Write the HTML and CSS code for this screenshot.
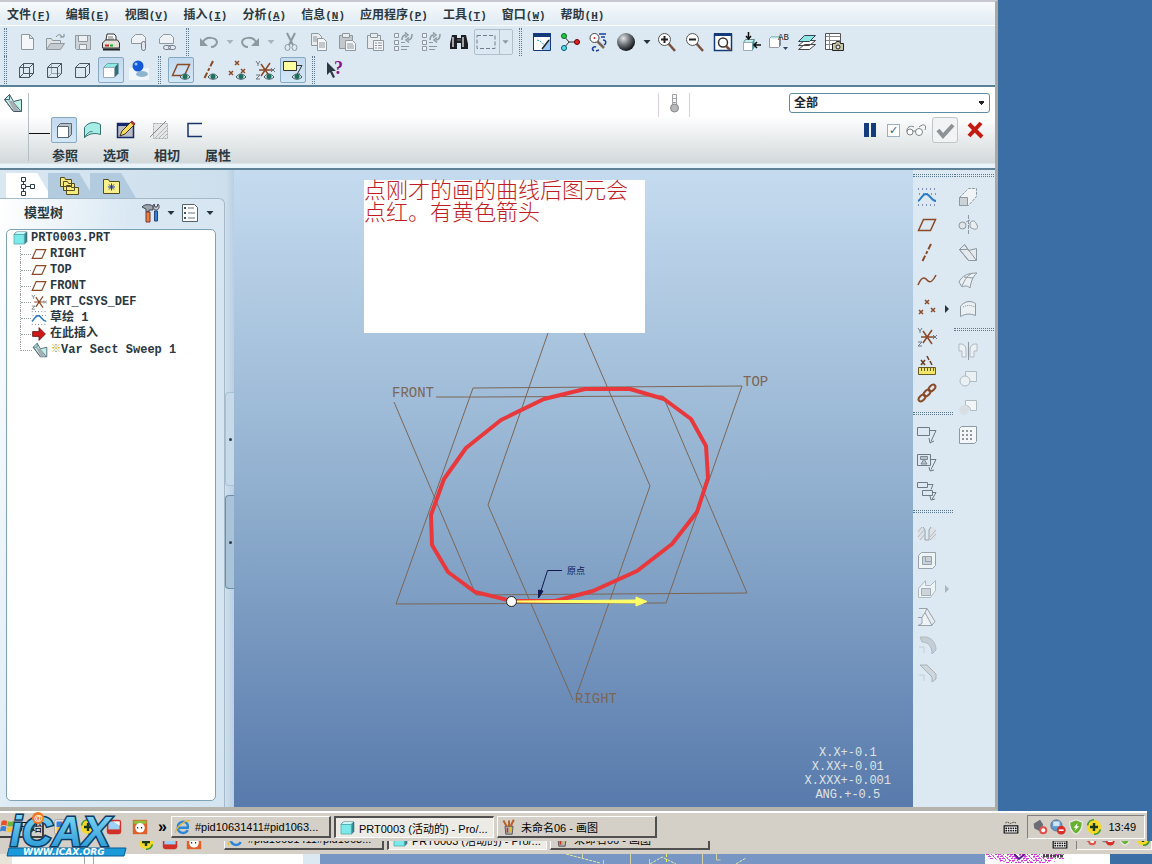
FILE: index.html
```html
<!DOCTYPE html>
<html lang="zh-CN">
<head>
  <meta charset="UTF-8">
  <meta name="viewport" content="width=device-width, initial-scale=1.0">
  <title>PRT0003 (活动的) - Pro/ENGINEER</title>
  <link rel="stylesheet" href="styles.css">
</head>
<body>

  <!-- Icon sprite, every symbol on a 20x20 grid -->
  <svg class="sprite" aria-hidden="true">
    <symbol id="i-caret" viewBox="0 0 8 20"><path d="M.500 8h7l-3.500 4z" fill="currentColor"/></symbol>
    <symbol id="i-new" viewBox="0 0 20 20"><path d="M4.500 2.500h8l4 4v11h-12zM12.500 2.500v4h4" fill="#f4f6f8" stroke="currentColor"/></symbol>
    <symbol id="i-open" viewBox="0 0 20 20"><path d="M1.500 17.500v-11h5l1 2h8v3" fill="#dfe3e6" stroke="currentColor"/><path d="M1.500 17.500l4-6h14l-4 6z" fill="#c6cbcf" stroke="currentColor"/><path d="M11 5c2-3 5-3 6 0M15 5h4v-3" fill="none" stroke="#7d868c"/></symbol>
    <symbol id="i-save" viewBox="0 0 20 20"><path d="M2.500 3.500h15v14h-14l-1-1z" fill="#cdd3d8" stroke="currentColor"/><path d="M5.500 3.500h9v6h-9zM6.500 12.500h7v5h-7z" fill="#eef1f3" stroke="currentColor"/></symbol>
    <symbol id="i-print" viewBox="0 0 20 20"><path d="M5 8l1-6h7l2 2v5z" fill="#fff" stroke="#333"/><path d="M7 5h5M7 7h6" stroke="#777"/><path d="M1.500 11l3-3h12l2 3v5h-17z" fill="#e4e2d8" stroke="#333"/><path d="M2 17.500h17" stroke="#222" stroke-width="2"/><path d="M4 13.500h4" stroke="#c22" stroke-width="2"/><path d="M9 13.500h3" stroke="#2a2" stroke-width="2"/></symbol>
    <symbol id="i-mail" viewBox="0 0 20 20"><path d="M2.500 11.500v-5l4-4h7l3 3v6z" fill="#eef2f5" stroke="currentColor"/><rect x="12.500" y="9.500" width="4" height="9" rx="2" fill="#e0e6ea" stroke="#778"/></symbol>
    <symbol id="i-link" viewBox="0 0 20 20"><path d="M2.500 11.500v-5l4-4h7l3 3v6z" fill="#eef2f5" stroke="currentColor"/><rect x="6.500" y="13.500" width="7" height="4" rx="2" fill="none" stroke="#778"/><rect x="11.500" y="13.500" width="7" height="4" rx="2" fill="none" stroke="#778"/></symbol>
    <symbol id="i-undo" viewBox="0 0 20 20"><path d="M4 10c3-6 13-5 14 0c0 3-3 5-6 5" fill="none" stroke="currentColor" stroke-width="2"/><path d="M1 6v8h8z" fill="currentColor"/></symbol>
    <symbol id="i-redo" viewBox="0 0 20 20"><path d="M16 10c-3-6-13-5-14 0c0 3 3 5 6 5" fill="none" stroke="currentColor" stroke-width="2"/><path d="M19 6v8h-8z" fill="currentColor"/></symbol>
    <symbol id="i-cut" viewBox="0 0 20 20"><path d="M6 1l6 12M14 1l-6 12" stroke="currentColor" stroke-width="2"/><ellipse cx="6.500" cy="15.500" rx="2.500" ry="3" fill="none" stroke="currentColor"/><ellipse cx="13.500" cy="15.500" rx="2.500" ry="3" fill="none" stroke="currentColor"/></symbol>
    <symbol id="i-copy" viewBox="0 0 20 20"><path d="M2.500 1.500h7l3 3v9h-10z" fill="#e8ecef" stroke="currentColor"/><path d="M8.500 6.500h6l3 3v9h-9z" fill="#f4f6f8" stroke="currentColor"/><path d="M4 5h4M4 7h4M4 9h4M10 11h6M10 13h6M10 15h6" stroke="currentColor"/></symbol>
    <symbol id="i-paste" viewBox="0 0 20 20"><path d="M2.500 3.500h13v13h-13z" fill="#c3c8cc" stroke="currentColor"/><path d="M5.500 1.500h7v4h-7z" fill="#e8ecef" stroke="currentColor"/><path d="M8.500 8.500h7l3 3v7h-10z" fill="#f4f6f8" stroke="currentColor"/><path d="M10 12h6M10 14h7M10 16h7" stroke="currentColor"/></symbol>
    <symbol id="i-paste2" viewBox="0 0 20 20"><path d="M2.500 3.500h13v13h-13z" fill="#e8ecef" stroke="currentColor"/><path d="M5.500 1.500h7v4h-7z" fill="#e8ecef" stroke="currentColor"/><path d="M8.500 8.500h10v10h-10z" fill="#f4f6f8" stroke="currentColor"/><path d="M10 11h2M13 11h4M10 13.500h2M13 13.500h4M10 16h2M13 16h4" stroke="currentColor"/></symbol>
    <symbol id="i-regen" viewBox="0 0 20 20"><path d="M1.500 1.500h4v4h-4zM1.500 8.500h4v4h-4zM1.500 14.500h4v4h-4z" fill="#eef" stroke="currentColor"/><path d="M8 10.500h4M8 14.500h8M8 17.500h6" stroke="currentColor"/><path d="M9 8c0-4 2-5 4-5M12 .500l3 2.500-3 2.500M19 2c0 4-1 6-4 6M16 5.500l-3 2.500 3 2.500" fill="none" stroke="currentColor" stroke-width="1.500"/></symbol>
    <symbol id="i-find" viewBox="0 0 20 20"><path d="M3 3h5v3h4v-3h5l2 9v5h-7v-6h-4v6h-7v-5z" fill="#1d1f22"/><path d="M4 5v10M14 5v10" stroke="#cfd3d6" stroke-width="1.500"/><path d="M8 8h4" stroke="#777"/></symbol>
    <symbol id="i-select" viewBox="0 0 20 20"><path d="M1 3.500h18v13h-18z" fill="none" stroke="#6f7f8c" stroke-dasharray="4 2"/></symbol>
    <symbol id="i-repaint" viewBox="0 0 20 20"><path d="M1.500 1.500h17v17h-17z" fill="#fff" stroke="#153a7a"/><path d="M10 18l8-12v12z" fill="#9cc8f4"/><path d="M1 1h18v4h-18z" fill="#153a7a"/><path d="M5 8c4 1 7 4 8 7" fill="none" stroke="#39c" stroke-dasharray="2 1"/><path d="M17 8l-7 9" stroke="#222" stroke-width="1.500"/></symbol>
    <symbol id="i-spin" viewBox="0 0 20 20"><path d="M4 4l5 6h7M9 10l-5 6" fill="none" stroke="#333"/><circle cx="4" cy="4" r="2.500" fill="#2c3" stroke="#063"/><circle cx="4" cy="16" r="2.500" fill="#5de" stroke="#057"/><circle cx="17" cy="10" r="2.500" fill="#d22" stroke="#600"/></symbol>
    <symbol id="i-orient" viewBox="0 0 20 20"><path d="M9 9l7 7" stroke="#765" stroke-width="2.500"/><circle cx="6.500" cy="6" r="4.500" fill="#fff" stroke="#444"/><circle cx="6.500" cy="6" r="1" fill="#c22"/><path d="M11 2h7M13 5h4M15 8c3 0 4 3 1 5M8 15c-3-1-5 2-2 4M8 19l3-1" fill="none" stroke="#1a3f9a" stroke-width="1.500"/></symbol>
    <symbol id="i-ball" viewBox="0 0 20 20"><circle cx="10" cy="10" r="9" fill="url(#g-ball)"/></symbol>
    <symbol id="i-zoomin" viewBox="0 0 20 20"><path d="M11 11l7 8" stroke="#7a5140" stroke-width="2.500"/><circle cx="7.500" cy="7.500" r="6" fill="#fff" stroke="#555"/><path d="M4 7.500h7M7.500 4v7" stroke="#222" stroke-width="2"/></symbol>
    <symbol id="i-zoomout" viewBox="0 0 20 20"><path d="M11 11l7 8" stroke="#7a5140" stroke-width="2.500"/><circle cx="7.500" cy="7.500" r="6" fill="#fff" stroke="#555"/><path d="M4 7.500h7" stroke="#222" stroke-width="2"/></symbol>
    <symbol id="i-refit" viewBox="0 0 20 20"><path d="M1.500 2.500h17v16h-17z" fill="#fff" stroke="#153a7a" stroke-width="1.500"/><path d="M1 1h18v3h-18z" fill="#153a7a"/><circle cx="10" cy="10.500" r="4.500" fill="#fff" stroke="#333" stroke-width="1.500"/><path d="M13 14l4 4" stroke="#7a5140" stroke-width="2.500"/></symbol>
    <symbol id="i-view" viewBox="0 0 20 20"><path d="M2.500 10.500l2-3h9l-2 3z" fill="#bff1ee" stroke="#688"/><path d="M2.500 10.500h9v8h-9z" fill="#fff" stroke="#9ab"/><path d="M11.500 10.500l2-3v8l-2 3z" fill="#3a9a98"/><path d="M7.500 0v6M5 4l2.500 3 2.500-3M20 13h-6M16 10l-3 3 3 3" fill="none" stroke="#111" stroke-width="1.500"/></symbol>
    <symbol id="i-saved" viewBox="0 0 20 20"><path d="M.500 6.500l2-2h9v9l-2 2h-9z" fill="#fff" stroke="#99a"/><path d="M1 6.500l2-2h9l-2 2z" fill="#a7e6e3"/><path d="M10 7l2-2v8l-2 2z" fill="#7a8a94"/><text x="9" y="8" font-family="Liberation Mono" font-size="9" fill="#222">AB</text><path d="M14 15h5l-2.500 3z" fill="#346"/></symbol>
    <symbol id="i-layers" viewBox="0 0 20 20"><path d="M1.500 17.500l6-5h11l-6 5zM1.500 13.500l6-5h11l-6 5z" fill="#fff" stroke="#444"/><path d="M1.500 9.500l6-6h11l-6 6z" fill="#8fe4e4" stroke="#345"/></symbol>
    <symbol id="i-camera" viewBox="0 0 20 20"><path d="M.500 1.500h15v16h-15z" fill="#fff" stroke="#555"/><path d="M1 4.500h14M1 8.500h14M1 12.500h14M4.500 2v15" stroke="#888"/><path d="M7.500 11.500h3l1-2h3l1 2h3v7h-11z" fill="#c8c4a8" stroke="#222"/><circle cx="13" cy="15" r="2" fill="#eee" stroke="#222"/></symbol>

    <symbol id="i-wire" viewBox="0 0 20 20"><path d="M2.500 7.500h10v10h-10zM6.500 3.500h10v10h-10zM2.500 7.500l4-4M12.500 7.500l4-4M12.500 17.500l4-4M2.500 17.500l4-4" fill="none" stroke="#4a565e"/></symbol>
    <symbol id="i-hidden" viewBox="0 0 20 20"><path d="M6.500 3.500v10h10M2.500 17.500l4-4" fill="none" stroke="#9aa5ac"/><path d="M2.500 7.500h10v10h-10zM2.500 7.500l4-4h10v10l-4 4M12.500 7.500l4-4" fill="none" stroke="#4a565e"/></symbol>
    <symbol id="i-nohidden" viewBox="0 0 20 20"><path d="M2.500 7.500h10v10h-10zM2.500 7.500l4-4h10v10l-4 4M12.500 7.500l4-4" fill="none" stroke="#4a565e"/></symbol>
    <symbol id="i-shade" viewBox="0 0 20 20"><path d="M2.500 7.500l4-4h11l-4 4z" fill="#8fe8e4" stroke="#6aa"/><path d="M13.500 7.500l4-4v10l-4 4z" fill="#2f6f78"/><path d="M2.500 7.500h11v10h-11z" fill="#fff" stroke="#9ab"/></symbol>
    <symbol id="i-real" viewBox="0 0 20 20"><path d="M0 8h20v12h-20z" fill="#eef5fb"/><ellipse cx="13" cy="14" rx="6" ry="3" fill="#8fb4d0"/><circle cx="9" cy="6" r="5.500" fill="#1558d8"/><circle cx="7" cy="4" r="1.500" fill="#9cc6ff"/></symbol>
    <symbol id="i-eye" viewBox="0 0 20 20"><path d="M9 17c3-4 7-4 10 0c-3 3-7 3-10 0z" fill="#d5ece6" stroke="#456"/><circle cx="14" cy="16.500" r="2.500" fill="#1f6f5e"/></symbol>
    <symbol id="i-plane" viewBox="0 0 20 20"><path d="M1.500 15.500l5-11h12l-5 11z" fill="none" stroke="currentColor" stroke-width="1.500"/></symbol>
    <symbol id="i-axis" viewBox="0 0 20 20"><path d="M14 1l-9 18" stroke="currentColor" stroke-width="2" stroke-dasharray="6 2 3 2"/></symbol>
    <symbol id="i-points" viewBox="0 0 20 20"><path d="M8 1l4 4m0-4l-4 4M2 11l4 4m0-4l-4 4M14 9l4 4m0-4l-4 4" stroke="currentColor" stroke-width="1.500"/></symbol>
    <symbol id="i-csys" viewBox="0 0 20 20"><path d="M4 10h13M6 4l9 13M15 3l-9 13" stroke="currentColor" stroke-width="1.500"/><path d="M1 1l2 3 2-3M3 4v2M1 15h4l-4 4h4M16 8l4 4m0-4l-4 4" fill="none" stroke="#6d7880"/></symbol>
    <symbol id="i-notes" viewBox="0 0 20 20"><path d="M.500 1.500h13v9h-13z" fill="#ffffa0" stroke="#333"/><path d="M14 5.500h5l-5 9M12 15l5-1" fill="none" stroke="#333"/></symbol>
    <symbol id="i-help" viewBox="0 0 20 20"><path d="M2 2v13l3-3 3 6 2-1-3-6h4z" fill="#2d3a42"/><text x="9" y="14" font-family="Liberation Serif" font-weight="bold" font-size="18" fill="#8a108a">?</text></symbol>

    <symbol id="i-sweep" viewBox="0 0 20 20"><path d="M1.500 6.500l5-5 4 7 8-2v12h-8z" fill="#bff0e8" stroke="#456"/><path d="M1.500 6.500l9 12M10 9l8 9.500M6.500 1.500v5l-5 0" fill="none" stroke="#567"/><path d="M5 7l5 1.500 6 9.500h-5z" fill="#a9adb0"/></symbol>
    <symbol id="i-solid" viewBox="0 0 20 20"><path d="M3.500 6.500l3-3h11v11l-3 3z" fill="#b9c0c6" stroke="#567"/><path d="M3.500 6.500h11v11h-11z" fill="#fff" stroke="#567"/></symbol>
    <symbol id="i-surface" viewBox="0 0 20 20"><path d="M2.500 17.500v-10c4-6 11-6 16-3v10c-6-2-11-1-16 3z" fill="#a5ede6" stroke="#387070"/><path d="M2.500 17.500c3-5 5-6 8-6" fill="none" stroke="#387070"/></symbol>
    <symbol id="i-sketch" viewBox="0 0 20 20"><path d="M1.500 3.500h16v14h-16z" fill="#b9bcc2" stroke="#152a6a" stroke-width="1.500"/><path d="M1 3h17v3h-17z" fill="#152a6a"/><path d="M4 16l2-5 10-10 3 3-10 10z" fill="#f5dc5a" stroke="#432"/><path d="M15 1.500l3.500 3" stroke="#a33" stroke-width="2.500"/></symbol>
    <symbol id="i-thin" viewBox="0 0 20 20"><path d="M3.500 3.500h14v15h-14z" fill="#e3e5e6" stroke="#a4a9ad" stroke-dasharray="2 1"/><path d="M5 18l12-12M9 18l8-8M13 18l4-4" stroke="#b4b9bd"/><path d="M0 17l16-16" stroke="#888"/></symbol>
    <symbol id="i-open-profile" viewBox="0 0 20 20"><path d="M18 3.500h-14v13h14" fill="none" stroke="#16356e" stroke-width="1.500"/></symbol>
    <symbol id="i-thermo" viewBox="0 0 20 20"><path d="M8.500 1.500h4v11h-4zM8.500 5.500h4M8.500 9.500h4" fill="#f4f4f4" stroke="#a0a4a8"/><circle cx="10.500" cy="15" r="4" fill="#b5b8ba" stroke="#888"/></symbol>
    <symbol id="i-pause" viewBox="0 0 20 20"><path d="M4 3h5v14h-5zM11 3h5v14h-5z" fill="#153c7c"/></symbol>
    <symbol id="i-glasses" viewBox="0 0 20 20"><path d="M1 12c-1-5 4-7 7-5M13 7c5-4 8-2 6 3" fill="none" stroke="#7c8488"/><circle cx="4" cy="12" r="3" fill="#fff" stroke="#7c8488"/><circle cx="13" cy="12" r="3.500" fill="#fff" stroke="#7c8488"/><path d="M7 11h3" stroke="#7c8488"/></symbol>
    <symbol id="i-ok" viewBox="0 0 20 20"><path d="M3 10l5 6 10-11" fill="none" stroke="#8d9296" stroke-width="4"/></symbol>
    <symbol id="i-cancel" viewBox="0 0 20 20"><path d="M4 4l13 13M16 3l-12 13" stroke="#c41a10" stroke-width="4"/></symbol>

    <symbol id="i-tree" viewBox="0 0 20 20"><path d="M4.500 1.500h4v4h-4zM4.500 8.500h4v4h-4zM4.500 15.500h4v4h-4zM13.500 8.500h4v4h-4zM6.500 6v2M6.500 13v2M9 10.500h4" fill="#fff" stroke="#2c3c46"/></symbol>
    <symbol id="i-folders" viewBox="0 0 20 20"><path d="M1.500 10.500v-9h4l1 2h6v7zM4.500 14.500v-9h4l1 2h6v7zM7.500 18.500v-9h4l1 2h7v7z" fill="#f6ec7e" stroke="#554a20"/></symbol>
    <symbol id="i-fav" viewBox="0 0 20 20"><path d="M2.500 17.500v-14h5l1 2h10v12z" fill="#f8f08a" stroke="#554a20"/><path d="M10.500 7.500v7M7 11h7M8 8.500l5 5M13 8.500l-5 5" stroke="#223a9a"/></symbol>
    <symbol id="i-tools" viewBox="0 0 20 20"><path d="M1 4c3-3 7-3 11-1v4h-4v2h-3v-3z" fill="#9aa4ab" stroke="#445"/><path d="M5 9h4v10h-4z" fill="#e8803a" stroke="#733"/><path d="M13 1c-1 4 0 6 1 6h2c2-1 3-4 1-6l-1 3h-2z" fill="#c5ccd1" stroke="#445"/><path d="M13.500 8h3v10h-3z" fill="#3a7fd6" stroke="#247"/></symbol>
    <symbol id="i-list" viewBox="0 0 20 20"><path d="M2.500 1.500h12l3 3v14h-15z" fill="#fdfdfe" stroke="#56626a"/><path d="M8 5h6M8 10h7M8 15h7" stroke="#678"/><path d="M4.500 4.500h1v1h-1zM4.500 9.500h1v1h-1zM4.500 14.500h1v1h-1z" stroke="#234"/></symbol>
    <symbol id="i-part" viewBox="0 0 20 20"><path d="M2.500 5.500l3-3h13v12l-3 3z" fill="#2d8f96" stroke="#356"/><path d="M2.500 5.500h13v12h-13z" fill="#7ceaea" stroke="#5aa"/><path d="M3 5l3-2.500h12l-3 2.500z" fill="#c9f8f8"/></symbol>
    <symbol id="i-curve" viewBox="0 0 20 20"><path d="M1 2h18M1 18h18M2 7h17" stroke="#2a3a8a" stroke-dasharray="1 3"/><path d="M1 14c3-1 4-7 8-7s5 7 10 7" fill="none" stroke="#2c7cc4" stroke-width="2"/></symbol>
    <symbol id="i-insert" viewBox="0 0 20 20"><path d="M2 7h8v-5l8 8-8 8v-5h-8z" fill="#d01818" stroke="#5a1010"/></symbol>

    <symbol id="i-spline" viewBox="0 0 20 20"><path d="M1 14c3-7 6-9 9-5s6 1 9-5" fill="none" stroke="currentColor" stroke-width="1.500"/></symbol>
    <symbol id="i-field" viewBox="0 0 20 20"><path d="M1.500 12.500h17v7h-17z" fill="#f0e66a" stroke="#6a5a20"/><path d="M4.500 13v3M7.500 13v3M10.500 13v3M13.500 13v3M16.500 13v3" stroke="#6a5a20"/><path d="M4 5l4 5m0-5l-4 5M10 1l2 4M13 6l2 4" stroke="#6a3c20" stroke-width="1.500"/></symbol>
    <symbol id="i-chain" viewBox="0 0 20 20"><g fill="none" stroke="currentColor" stroke-width="2"><ellipse cx="5" cy="15" rx="4" ry="2.500" transform="rotate(-45 5 15)"/><ellipse cx="10" cy="10" rx="4" ry="2.500" transform="rotate(-45 10 10)"/><ellipse cx="15" cy="5" rx="4" ry="2.500" transform="rotate(-45 15 5)"/></g></symbol>
    <symbol id="i-note1" viewBox="0 0 20 20"><path d="M.500 2.500h12v8h-12zM13 5.500h6l-5 11M12 13l1 5 4-2" fill="none" stroke="#6d7a84"/></symbol>
    <symbol id="i-note2" viewBox="0 0 20 20"><path d="M.500 1.500h13v11h-13zM14 6.500h5l-5 10M12 14l1 4 4-1" fill="none" stroke="#6d7a84"/><path d="M3.500 3.500h7v3h-7zM4 11l3-5 3 5z" fill="#b8c3cb" stroke="#7c8992"/></symbol>
    <symbol id="i-note3" viewBox="0 0 20 20"><path d="M.500 1.500h10v5h-10zM5.500 9.500h10v5h-10zM11 3.500h5l-2 5M16 11.500h3l-4 7M13 15l1 4 4-1" fill="none" stroke="#6d7a84"/></symbol>
    <symbol id="i-hole" viewBox="0 0 20 20"><path d="M1 4h5l2 3v10h-7zM19 4h-5l-2 3v10h7z" fill="#dde3e7"/><path d="M6 4l2 3v10h4v-10l2-3" fill="none" stroke="currentColor"/><path d="M1 9l4-5M1 14l6-7M3 17l5-6M13 14l6-7M13 17l6-6" stroke="#b0bac1"/></symbol>
    <symbol id="i-shell" viewBox="0 0 20 20"><path d="M1.500 4.500l3-3h14v13l-3 3h-14z" fill="#eef3f6" stroke="currentColor"/><path d="M5.500 5.500h9v8h-9z" fill="#c9d2d8" stroke="currentColor"/><path d="M8.500 5.500v5h6" fill="none" stroke="currentColor"/></symbol>
    <symbol id="i-rib" viewBox="0 0 20 20"><path d="M1.500 9.500l7-8v5h5l5-5v10l-5 7h-12z" fill="#eef3f6" stroke="#b0bac1"/><path d="M4.500 9.500h9v7h-9z" fill="#cdd5da" stroke="#a3aeb6"/></symbol>
    <symbol id="i-draft" viewBox="0 0 20 20"><path d="M2 1.500h8l8 13-3 3.500" fill="#e6ecf0" stroke="currentColor"/><path d="M1 18.500h14l-7-13-3 5v6l-4 2zM8 5.500l2-4M5 10.500h-4" fill="#eef3f6" stroke="currentColor"/></symbol>
    <symbol id="i-round" viewBox="0 0 20 20"><path d="M3 2h6c6 1 10 6 10 13l-4 4c0-8-4-12-10-12z" fill="#c5ced4" stroke="#b0bac1"/><path d="M2 12h5v6" fill="none" stroke="#c5ced4"/></symbol>
    <symbol id="i-chamfer" viewBox="0 0 20 20"><path d="M3 2h7l9 9v5l-4 3v-5l-8-8z" fill="#cfd6db" stroke="#a8b3ba"/><path d="M2 12h5v6" fill="none" stroke="#c5ced4"/></symbol>
    <symbol id="i-extrude" viewBox="0 0 20 20"><path d="M1.500 10.500l7-7 2-2h8v8l-8 9h-9z" fill="#f0f4f7" stroke="currentColor" stroke-dasharray="3 1"/><path d="M1.500 10.500h8v8h-8z" fill="#cbd3d9" stroke="currentColor"/></symbol>
    <symbol id="i-revolve" viewBox="0 0 20 20"><circle cx="4.500" cy="10.500" r="3.500" fill="#dfe5e9" stroke="currentColor"/><path d="M10.500 0v20" stroke="currentColor" stroke-dasharray="4 1"/><path d="M12 8c3-4 5-2 7 2s-2 6-7 2zM8 7l4-2" fill="#e9eef1" stroke="currentColor"/></symbol>
    <symbol id="i-vss" viewBox="0 0 20 20"><path d="M1.500 6.500l5-5 4 6 8-2v12h-8z" fill="#e3e9ed" stroke="currentColor"/><path d="M1.500 6.500l9 11M6.500 1.500l12 16M1.500 6.500h8" fill="none" stroke="currentColor"/></symbol>
    <symbol id="i-boundary" viewBox="0 0 20 20"><path d="M1 11c3-6 8-9 18-9-5 4-6 10-7 15-3-3-6-2-8-1zM6 6c3 0 6 1 9 1M4 15c3-7 6-11 9-12" fill="#eaf0f3" stroke="currentColor"/></symbol>
    <symbol id="i-style" viewBox="0 0 20 20"><path d="M2.500 17.500v-10c4-6 11-6 15-3v12c-5-2-10-2-15 1z" fill="#eaf0f3" stroke="currentColor"/><path d="M5 8c4-2 8-2 12 0" fill="none" stroke="currentColor" stroke-dasharray="1 1"/></symbol>
    <symbol id="i-mirror" viewBox="0 0 20 20"><path d="M1 3h3c3 1 4 3 4 6v7h-4v-6h-3zM19 3h-3c-3 1-4 3-4 6v7h4v-6h3z" fill="#eaf0f3" stroke="#b0bac1"/><path d="M10.500 1v18" stroke="currentColor"/></symbol>
    <symbol id="i-merge" viewBox="0 0 20 20"><path d="M7.500 2.500h11v10h-11z" fill="#eaf0f3" stroke="#b0bac1"/><circle cx="7" cy="12" r="5" fill="#eaf0f3" stroke="#b0bac1"/></symbol>
    <symbol id="i-trim" viewBox="0 0 20 20"><path d="M7.500 3.500h11v10h-6c0-3-2-5-5-5z" fill="#f2f6f8" stroke="#b0bac1"/><circle cx="6" cy="13" r="5" fill="#d8dfe4"/></symbol>
    <symbol id="i-pattern" viewBox="0 0 20 20"><path d="M1.500 3.500l2-2h15v15l-2 2h-15z" fill="#f4f7f9" stroke="currentColor"/><path d="M4 6h11M4 10h11M4 14h11" stroke="currentColor" stroke-width="2" stroke-dasharray="2 2"/></symbol>

    <symbol id="i-flag" viewBox="0 0 20 20"><path d="M2 4c3-2 5-1 7 0l-1 6c-2-1-4-2-7 0z" fill="#e8502a"/><path d="M10 4c3 1 5 1 8-1l-1 7c-3 1-5 1-8 0z" fill="#6cb43a"/><path d="M1 11c3-2 5-1 7 0l-1 6c-2-1-4-2-7 0z" fill="#3a7fd6"/><path d="M9 11c3 1 5 1 8 0l-1 6c-3 1-5 1-8 0z" fill="#f4c430"/></symbol>
    <symbol id="i-office" viewBox="0 0 20 20"><rect x="1" y="1" width="18" height="18" rx="2" fill="#fff" stroke="#888"/><path d="M3 3h7v7h-7z" fill="#3a7fd6"/><path d="M10 3h7v7h-7z" fill="#e86a2a"/><path d="M3 10h7v7h-7z" fill="#f4c430"/><path d="M10 10h7v7h-7z" fill="#5ab04a"/></symbol>
    <symbol id="i-plus" viewBox="0 0 20 20"><circle cx="10" cy="10" r="9" fill="#f6d828"/><path d="M2 8a8 8 0 0 1 8-7M18 13a8 8 0 0 1-8 6" stroke="#3c9a2a" stroke-width="2" fill="none"/><path d="M5 10h10M10 5v10" stroke="#163a16" stroke-width="3"/></symbol>
    <symbol id="i-photo" viewBox="0 0 20 20"><rect x="1" y="1" width="18" height="18" rx="3" fill="#d03028"/><path d="M3 3h14v10h-14z" fill="#9cd0f4"/><path d="M9 3h8v5z" fill="#fff"/></symbol>
    <symbol id="i-face" viewBox="0 0 20 20"><path d="M1 1h18v18h-18z" fill="#e0602a"/><path d="M2 2h16v4h-16z" fill="#8cc03a"/><circle cx="10" cy="11" r="6" fill="#fff"/><path d="M7 10v2M12 10v2" stroke="#333" stroke-width="1.500"/></symbol>
    <symbol id="i-ie" viewBox="0 0 20 20"><path d="M16 14c-2 3-5 4-8 3-6-2-6-11 0-13 5-2 9 2 8 7h-11" fill="none" stroke="#2a86d8" stroke-width="3"/><path d="M1 18c-2-4 9-17 18-16" fill="none" stroke="#e8b830" stroke-width="1.500"/></symbol>
    <symbol id="i-paint" viewBox="0 0 20 20"><path d="M5 9h10l-1 10h-8z" fill="#a8b0b4" stroke="#444"/><path d="M7 9l-4-7M10 9v-7M12 9l4-8" stroke="#b8602a" stroke-width="2.500"/><path d="M8 11v6" stroke="#d03028" stroke-width="2"/><path d="M12 10v7" stroke="#e8c040" stroke-width="2"/></symbol>
    <symbol id="i-keyboard" viewBox="0 0 20 20"><path d="M3 5c3-3 5 2 8 0s4 0 6 0" fill="none" stroke="#222" stroke-dasharray="2 1"/><path d="M1.500 8.500h17v9h-17z" fill="#fff" stroke="#111" stroke-width="1.500"/><path d="M3 11.500h14M3 14.500h14" stroke="#111" stroke-width="2" stroke-dasharray="2 1"/></symbol>
    <symbol id="i-sound" viewBox="0 0 20 20"><path d="M2 6l8-5 4 6-3 9-8-4z" fill="#6a6e74"/><circle cx="14" cy="14" r="5" fill="#e05048"/><circle cx="14" cy="14" r="2.500" fill="#fff"/></symbol>
    <symbol id="i-net" viewBox="0 0 20 20"><circle cx="8" cy="8" r="7" fill="#5a9ad0" stroke="#667"/><path d="M4 3h8v6h-8z" fill="#cfe6f8"/><circle cx="14" cy="14" r="5.500" fill="#d83028"/><path d="M11 14h6" stroke="#fff" stroke-width="2"/></symbol>
    <symbol id="i-shield" viewBox="0 0 20 20"><path d="M10 1l8 3c0 7-2 12-8 15c-6-3-8-8-8-15z" fill="#68b030" stroke="#eee" stroke-width="1.500"/><path d="M12 5l-5 6h3l-2 4 6-6h-3z" fill="#fff"/></symbol>
    <radialGradient id="g-ball" cx="0.350" cy="0.300" r="0.700"><stop offset="0" stop-color="#e4e6e8"/><stop offset="0.500" stop-color="#70767c"/><stop offset="1" stop-color="#15181b"/></radialGradient>
    <linearGradient id="g-logo" x1="0" y1="0" x2="0" y2="1"><stop offset="0" stop-color="#8fe0fa"/><stop offset="1" stop-color="#1a8fd0"/></linearGradient>
  </svg>

  <div class="app">
    <!-- Menu bar -->
    <nav class="menubar">
      <button>文件<span>(<u>F</u>)</span></button>
      <button>编辑<span>(<u>E</u>)</span></button>
      <button>视图<span>(<u>V</u>)</span></button>
      <button>插入<span>(<u>I</u>)</span></button>
      <button>分析<span>(<u>A</u>)</span></button>
      <button>信息<span>(<u>N</u>)</span></button>
      <button>应用程序<span>(<u>P</u>)</span></button>
      <button>工具<span>(<u>T</u>)</span></button>
      <button>窗口<span>(<u>W</u>)</span></button>
      <button>帮助<span>(<u>H</u>)</span></button>
    </nav>

    <!-- Main toolbars -->
    <div class="toolbars">
      <div class="toolbar">
        <i class="grip"></i>
        <button class="tool" aria-label="新建"><svg><use href="#i-new"/></svg></button>
        <button class="tool" aria-label="打开"><svg><use href="#i-open"/></svg></button>
        <button class="tool" aria-label="保存"><svg><use href="#i-save"/></svg></button>
        <button class="tool" aria-label="打印"><svg><use href="#i-print"/></svg></button>
        <button class="tool" aria-label="发送附件"><svg><use href="#i-mail"/></svg></button>
        <button class="tool" aria-label="发送链接"><svg><use href="#i-link"/></svg></button>
        <i class="grip"></i>
        <button class="tool" aria-label="撤消"><svg><use href="#i-undo"/></svg></button>
        <button class="drop" aria-label="撤消列表"><svg><use href="#i-caret"/></svg></button>
        <button class="tool" aria-label="重做"><svg><use href="#i-redo"/></svg></button>
        <button class="drop" aria-label="重做列表"><svg><use href="#i-caret"/></svg></button>
        <button class="tool" aria-label="剪切"><svg><use href="#i-cut"/></svg></button>
        <button class="tool" aria-label="复制"><svg><use href="#i-copy"/></svg></button>
        <button class="tool" aria-label="粘贴"><svg><use href="#i-paste"/></svg></button>
        <button class="tool" aria-label="选择性粘贴"><svg><use href="#i-paste2"/></svg></button>
        <button class="tool" aria-label="再生"><svg><use href="#i-regen"/></svg></button>
        <button class="tool" aria-label="再生管理器"><svg><use href="#i-regen"/></svg></button>
        <button class="tool" aria-label="查找"><svg><use href="#i-find"/></svg></button>
        <button class="tool split" aria-label="选取框"><svg><use href="#i-select"/></svg><svg class="caret"><use href="#i-caret"/></svg></button>
        <i class="grip"></i>
        <button class="tool" aria-label="重画"><svg><use href="#i-repaint"/></svg></button>
        <button class="tool" aria-label="旋转中心"><svg><use href="#i-spin"/></svg></button>
        <button class="tool" aria-label="定向模式"><svg><use href="#i-orient"/></svg></button>
        <button class="tool" aria-label="外观库"><svg><use href="#i-ball"/></svg></button>
        <button class="drop dark" aria-label="外观列表"><svg><use href="#i-caret"/></svg></button>
        <button class="tool" aria-label="放大"><svg><use href="#i-zoomin"/></svg></button>
        <button class="tool" aria-label="缩小"><svg><use href="#i-zoomout"/></svg></button>
        <button class="tool" aria-label="重新调整"><svg><use href="#i-refit"/></svg></button>
        <button class="tool" aria-label="重定向"><svg><use href="#i-view"/></svg></button>
        <button class="tool" aria-label="已保存视图"><svg><use href="#i-saved"/></svg></button>
        <button class="tool" aria-label="层"><svg><use href="#i-layers"/></svg></button>
        <button class="tool" aria-label="视图管理器"><svg><use href="#i-camera"/></svg></button>
      </div>
      <div class="toolbar">
        <i class="grip"></i>
        <button class="tool" aria-label="线框"><svg><use href="#i-wire"/></svg></button>
        <button class="tool" aria-label="隐藏线"><svg><use href="#i-hidden"/></svg></button>
        <button class="tool" aria-label="无隐藏线"><svg><use href="#i-nohidden"/></svg></button>
        <button class="tool on" aria-label="着色"><svg><use href="#i-shade"/></svg></button>
        <button class="tool" aria-label="增强真实感"><svg><use href="#i-real"/></svg></button>
        <i class="grip"></i>
        <button class="tool datum on" aria-label="基准平面显示"><svg><use href="#i-plane"/><use href="#i-eye"/></svg></button>
        <button class="tool datum" aria-label="基准轴显示"><svg><use href="#i-axis"/><use href="#i-eye"/></svg></button>
        <button class="tool datum" aria-label="基准点显示"><svg><use href="#i-points"/><use href="#i-eye"/></svg></button>
        <button class="tool datum" aria-label="坐标系显示"><svg><use href="#i-csys"/><use href="#i-eye"/></svg></button>
        <button class="tool datum on" aria-label="注释显示"><svg><use href="#i-notes"/><use href="#i-eye"/></svg></button>
        <i class="grip"></i>
        <button class="tool" aria-label="上下文帮助"><svg><use href="#i-help"/></svg></button>
      </div>
    </div>

    <!-- Feature dashboard -->
    <section class="dashboard">
      <div class="dash-feature"><svg><use href="#i-sweep"/></svg></div>
      <div class="dash-main">
        <div class="dash-options">
          <i class="dash-line"></i>
          <button class="tool on" aria-label="实体"><svg><use href="#i-solid"/></svg></button>
          <button class="tool" aria-label="曲面"><svg><use href="#i-surface"/></svg></button>
          <i class="dash-gap"></i>
          <button class="tool" aria-label="草绘截面"><svg><use href="#i-sketch"/></svg></button>
          <i class="dash-gap"></i>
          <button class="tool" aria-label="移除材料"><svg><use href="#i-thin"/></svg></button>
          <i class="dash-gap"></i>
          <button class="tool" aria-label="薄板"><svg><use href="#i-open-profile"/></svg></button>
        </div>
        <div class="dash-tabs">
          <button>参照</button>
          <button>选项</button>
          <button>相切</button>
          <button>属性</button>
        </div>
      </div>
      <div class="dash-status"><svg><use href="#i-thermo"/></svg></div>
      <div class="dash-right">
        <select class="filter" aria-label="选取过滤器"><option>全部</option></select>
        <div class="dash-actions">
          <button class="tool" aria-label="暂停"><svg><use href="#i-pause"/></svg></button>
          <input class="preview" type="checkbox" aria-label="预览" checked>
          <button class="tool glasses" aria-label="几何预览"><svg><use href="#i-glasses"/></svg></button>
          <button class="tool ok" aria-label="完成"><svg><use href="#i-ok"/></svg></button>
          <button class="tool" aria-label="取消"><svg><use href="#i-cancel"/></svg></button>
        </div>
      </div>
    </section>

    <main class="workspace">
      <!-- Model tree -->
      <aside class="navigator">
        <div class="nav-tabs">
          <button class="nav-tab current" aria-label="模型树"><svg><use href="#i-tree"/></svg></button>
          <button class="nav-tab" aria-label="文件夹浏览器"><svg><use href="#i-folders"/></svg></button>
          <button class="nav-tab" aria-label="收藏夹"><svg><use href="#i-fav"/></svg></button>
        </div>
        <div class="nav-body">
          <header class="nav-head">
            <h2>模型树</h2>
            <button class="tool" aria-label="设置"><svg><use href="#i-tools"/></svg></button>
            <button class="drop dark" aria-label="设置列表"><svg><use href="#i-caret"/></svg></button>
            <button class="tool" aria-label="显示"><svg><use href="#i-list"/></svg></button>
            <button class="drop dark" aria-label="显示列表"><svg><use href="#i-caret"/></svg></button>
          </header>
          <div class="tree">
            <div class="tree-root"><svg><use href="#i-part"/></svg>PRT0003.PRT</div>
            <ul>
              <li><svg><use href="#i-plane"/></svg>RIGHT</li>
              <li><svg><use href="#i-plane"/></svg>TOP</li>
              <li><svg><use href="#i-plane"/></svg>FRONT</li>
              <li><svg><use href="#i-csys"/></svg>PRT_CSYS_DEF</li>
              <li><svg><use href="#i-curve"/></svg>草绘 1</li>
              <li><svg><use href="#i-insert"/></svg>在此插入</li>
              <li><svg><use href="#i-sweep"/></svg><b class="mark">※</b>Var Sect Sweep 1</li>
            </ul>
          </div>
        </div>
      </aside>
      <div class="sash">
        <i class="sash-handle"></i>
        <i class="sash-handle low"></i>
      </div>

      <!-- Graphics window -->
      <div class="viewport">
        <svg class="scene" viewBox="234 170 679 637" preserveAspectRatio="xMinYMin meet">
          <!-- datum planes -->
          <g class="datum-lines">
            <path d="M473 388L742 386L666 603L396 604Z"/>
            <path d="M436 397H481L663 396L747 593L476 595L394 402"/>
            <path d="M548 333L488 505L573 700M584 333L650 486L577 694"/>
          </g>
          <g class="datum-names">
            <text x="392" y="397">FRONT</text>
            <text x="743" y="386">TOP</text>
            <text x="575" y="703">RIGHT</text>
          </g>
          <!-- selected trajectory -->
          <path class="trajectory" d="M512 601L475 592L448 572L432 545L431 515L444 479L466 448L501 420L544 399L585 389H630L664 399L691 419L706 446L708 478L697 512L672 544L637 571L593 591L555 601Z"/>
          <path class="arrow" d="M516 601L636 600V597L647 601.500L636 606V603L516 602Z"/>
          <circle class="start" cx="511.500" cy="601.500" r="5"/>
          <path class="leader" d="M562 570.500H547.500L540 594"/>
          <path class="leader-head" d="M538.500 598V590L543 591Z"/>
          <text class="origin" x="567" y="574">原点</text>
        </svg>
        <p class="memo">点刚才的画的曲线后图元会点红。有黄色箭头</p>
        <div class="tolerance">
          <div>X.X+-0.1</div>
          <div>X.XX+-0.01</div>
          <div>X.XXX+-0.001</div>
          <div>ANG.+-0.5</div>
        </div>
      </div>

      <!-- Feature toolbars -->
      <div class="features">
        <div class="feature-col datum">
          <i class="rule"></i>
          <button class="tool" aria-label="草绘"><svg><use href="#i-curve"/></svg></button>
          <button class="tool" aria-label="平面"><svg><use href="#i-plane"/></svg></button>
          <button class="tool" aria-label="轴"><svg><use href="#i-axis"/></svg></button>
          <button class="tool" aria-label="曲线"><svg><use href="#i-spline"/></svg></button>
          <div class="flyout">
            <button class="tool" aria-label="点"><svg><use href="#i-points"/></svg></button>
            <i class="fly-arrow"></i>
          </div>
          <button class="tool" aria-label="坐标系"><svg><use href="#i-csys"/></svg></button>
          <button class="tool" aria-label="分析"><svg><use href="#i-field"/></svg></button>
          <button class="tool" aria-label="参照"><svg><use href="#i-chain"/></svg></button>
          <i class="rule"></i>
          <button class="tool" aria-label="注释"><svg><use href="#i-note1"/></svg></button>
          <button class="tool" aria-label="注释特征"><svg><use href="#i-note2"/></svg></button>
          <button class="tool" aria-label="传播"><svg><use href="#i-note3"/></svg></button>
          <i class="rule"></i>
          <div class="flyout-group">
            <button class="tool" aria-label="孔"><svg><use href="#i-hole"/></svg></button>
            <button class="tool" aria-label="壳"><svg><use href="#i-shell"/></svg></button>
            <div class="flyout">
              <button class="tool" aria-label="筋"><svg><use href="#i-rib"/></svg></button>
              <i class="fly-arrow"></i>
            </div>
            <button class="tool" aria-label="拔模"><svg><use href="#i-draft"/></svg></button>
            <button class="tool" aria-label="倒圆角"><svg><use href="#i-round"/></svg></button>
            <button class="tool" aria-label="倒角"><svg><use href="#i-chamfer"/></svg></button>
          </div>
        </div>
        <div class="feature-col">
          <i class="rule"></i>
          <button class="tool" aria-label="拉伸"><svg><use href="#i-extrude"/></svg></button>
          <button class="tool" aria-label="旋转"><svg><use href="#i-revolve"/></svg></button>
          <button class="tool" aria-label="可变截面扫描"><svg><use href="#i-vss"/></svg></button>
          <button class="tool" aria-label="边界混合"><svg><use href="#i-boundary"/></svg></button>
          <button class="tool" aria-label="造型"><svg><use href="#i-style"/></svg></button>
          <i class="rule"></i>
          <button class="tool" aria-label="镜像"><svg><use href="#i-mirror"/></svg></button>
          <button class="tool" aria-label="合并"><svg><use href="#i-merge"/></svg></button>
          <button class="tool" aria-label="修剪"><svg><use href="#i-trim"/></svg></button>
          <button class="tool" aria-label="阵列"><svg><use href="#i-pattern"/></svg></button>
        </div>
      </div>
    </main>
  </div>

  <!-- Windows taskbar -->
  <footer class="bottom">
    <div class="taskbar">
      <button class="start-button"><svg><use href="#i-flag"/></svg>开始</button>
      <div class="quick">
        <svg><use href="#i-office"/></svg>
        <svg><use href="#i-plus"/></svg>
        <svg><use href="#i-photo"/></svg>
        <svg><use href="#i-face"/></svg>
        <span>»</span>
      </div>
      <button class="task"><svg><use href="#i-ie"/></svg>#pid10631411#pid1063...</button>
      <button class="task pressed"><svg><use href="#i-part"/></svg>PRT0003 (活动的) - Pro/...</button>
      <button class="task"><svg><use href="#i-paint"/></svg>未命名06 - 画图</button>
      <svg class="keyboard"><use href="#i-keyboard"/></svg>
      <div class="tray">
        <svg><use href="#i-sound"/></svg>
        <svg><use href="#i-net"/></svg>
        <svg><use href="#i-shield"/></svg>
        <svg><use href="#i-plus"/></svg>
        <time>13:49</time>
      </div>
    </div>

    <!-- second taskbar, mostly covered by the first -->
    <div class="covered" aria-hidden="true">
      <div class="quick">
        <svg><use href="#i-plus"/></svg>
        <svg><use href="#i-photo"/></svg>
        <svg><use href="#i-face"/></svg>
      </div>
      <div class="task"><svg><use href="#i-ie"/></svg>#pid10631411#pid1063...</div>
      <div class="task pressed"><svg><use href="#i-part"/></svg>PRT0003 (活动的) - Pro/...</div>
      <div class="task"><svg><use href="#i-paint"/></svg>未命名06 - 画图</div>
      <svg class="keyboard"><use href="#i-keyboard"/></svg>
      <div class="tray">
        <svg><use href="#i-sound"/></svg>
        <svg><use href="#i-net"/></svg>
        <svg><use href="#i-shield"/></svg>
        <svg><use href="#i-plus"/></svg>
      </div>
    </div>

    <div class="remains" aria-hidden="true">
      <div class="remains-page"></div>
      <div class="remains-edge"></div>
      <div class="remains-view">
        <svg viewBox="320 854 670 10" preserveAspectRatio="xMinYMin meet">
          <path d="M566 854L600 863M650 864L662 857L676 864M736 864L746 858" fill="none" stroke="#e6ee9a" stroke-dasharray="3 1"/>
          <path d="M582.500 854v5M603.500 860v4M630.500 854v10M649.500 859v5M702.500 854v10M716.500 854v6h4" fill="none" stroke="#d9d2a0"/>
          <path d="M666.500 854v10" stroke="#f4f45a" stroke-dasharray="3 2"/>
        </svg>
      </div>
      <div class="remains-noise">
        <svg viewBox="985 854 125 10" preserveAspectRatio="xMinYMin meet">
          <path d="M986 854.500h78M988 856.500h60M990 858.500h74M1000 860.500h51M1006 862.500h42" stroke="#d238d8" stroke-dasharray="3 2 1 3 2 1"/>
          <path d="M989 855.500h70M994 857.500h66M996 859.500h52M1000 861.500h56" stroke="#e27ae8" stroke-dasharray="1 2 2 4"/>
          <path d="M1014 854l5 5 6-5" fill="none" stroke="#5a1a90" stroke-width="2"/>
          <path d="M1043 856h20" stroke="#444" stroke-width="3" stroke-dasharray="2 1 3 1"/>
        </svg>
      </div>
    </div>

    <svg class="logo" viewBox="0 0 122 48" role="img" aria-label="ICAX">
      <text class="logo-name" x="4" y="35">iCAX</text>
      <circle cx="32" cy="7" r="6" fill="#f07a1c"/>
      <text class="logo-at" x="28" y="10">@</text>
      <path d="M3 37h117l-2 8h-117z" fill="#1a9ad8" stroke="#0a5a90"/>
      <text class="logo-url" x="17" y="44">WWW.ICAX.ORG</text>
    </svg>
  </footer>

</body>
</html>
```
FILE: styles.css
```css
* {
  box-sizing: border-box;
}

body {
  display: flex;
  flex-direction: column;
  height: 100vh;
  margin: 0;
  overflow: hidden;
  background: #3a6ea5;
  color: #2b3840;
  font: 12px "Liberation Sans", "Noto Sans CJK SC", sans-serif;
}

button {
  margin: 0;
  padding: 0;
  border: 0;
  background: none;
  color: inherit;
  font: inherit;
}

svg {
  display: block;
  flex: none;
}

.sprite {
  position: absolute;
  width: 0;
  height: 0;
}

/* Application window */
.app {
  display: flex;
  flex: 1;
  flex-direction: column;
  min-height: 0;
  margin-right: 154px;
  border: 1px solid #c8c8d0;
  border-width: 2px 3px 4px 0;
  border-right-color: #a9a99f;
  border-bottom-color: #b4b4ac;
  background: #dce9f2;
}

.menubar {
  display: flex;
  align-items: center;
  gap: 15px;
  height: 24px;
  padding-left: 7px;
  border-bottom: 1px solid #fff;
  background: linear-gradient(#f7fafc, #e0ebf3);
  font: bold 12px "Noto Sans CJK SC", sans-serif;
}

.menubar button {
  white-space: nowrap;
}

.menubar span {
  font: bold 11px "Liberation Mono", monospace;
}

/* Toolbars */
.toolbars {
  height: 61px;
  padding-top: 2px;
  border-bottom: 2px solid #5b8196;
  background: #dce9f2;
}

.toolbar {
  display: flex;
  align-items: center;
  height: 28px;
}

.grip {
  flex: none;
  width: 3px;
  height: 28px;
  margin: 0 6px 0 5px;
  border: 1px dotted #5f7a8c;
  border-width: 0 1px;
}

.grip:first-child {
  margin: 0 6px 0 4px;
}

.tool {
  display: flex;
  flex: none;
  align-items: center;
  justify-content: center;
  width: 28px;
  height: 28px;
  color: #8e989f;
}

.tool svg {
  width: 20px;
  height: 20px;
}

.tool.on {
  width: 26px;
  height: 26px;
  margin: 0 1px;
  border: 1px solid #86a9c2;
  border-radius: 2px;
  background: linear-gradient(#c3d9ee, #d3e7f8);
}

.tool.split {
  width: 39px;
  height: 26px;
  margin: 0 1px;
  border: 1px solid #b0bfca;
  border-radius: 2px;
}

.tool.split .caret {
  width: 12px;
  height: 24px;
  margin-left: 3px;
  padding: 0 2px;
  border-left: 1px solid #b0bfca;
}

.drop {
  flex: none;
  width: 13px;
  height: 28px;
  color: #a9b4bc;
}

.drop svg {
  width: 8px;
  height: 20px;
  margin: 0 auto;
}

.drop.dark {
  color: #26343d;
}

.datum .tool,
.tool.datum {
  color: #8a4a28;
}

/* Dashboard */
.dashboard {
  display: flex;
  height: 83px;
  padding-top: 6px;
  border-bottom: 2px solid #5f8296;
  background: linear-gradient(#fff 35%, #d2d9db 94%, #e8f3fa 95%);
}

.dash-feature {
  width: 29px;
  height: 68px;
  padding-left: 3px;
  border-right: 1px solid #b4bec4;
}

.dash-feature svg,
.dash-status svg {
  width: 20px;
  height: 20px;
}

.dash-main {
  flex: 1;
  padding-top: 23px;
}

.dash-options {
  display: flex;
  align-items: center;
  height: 28px;
}

.dash-line {
  width: 21px;
  height: 1px;
  margin-top: 6px;
  background: #111;
}

.dash-gap {
  width: 6px;
}

.dash-tabs {
  display: flex;
  gap: 25px;
  padding-left: 23px;
  font: bold 13px/22px "Noto Sans CJK SC", sans-serif;
}

.dash-status {
  display: flex;
  justify-content: center;
  width: 32px;
  height: 24px;
  border: 1px solid #d9cfe0;
  border-width: 0 1px;
}

.dash-right {
  width: 201px;
  margin: 0 5px 0 99px;
}

.filter {
  display: block;
  appearance: none;
  width: 100%;
  height: 20px;
  padding: 0 4px;
  border: 1px solid #5f8ea4;
  border-radius: 3px;
  color: #1c262c;
  font: bold 12px/18px "Liberation Sans", "Noto Sans CJK SC", sans-serif;
  background: linear-gradient(to bottom left, #222 50%, transparent 50%) right 6px center / 3px 4px no-repeat,
              linear-gradient(to bottom right, transparent 50%, #222 50%) right 6px center / 0 0 no-repeat,
              #fff;
  background: conic-gradient(from -40deg at 50% 100%, #222 80deg, transparent 0) right 4px center / 7px 4px no-repeat, #fff;
}

.dash-actions {
  display: flex;
  align-items: center;
  justify-content: flex-end;
  gap: 3px;
  height: 28px;
  margin-top: 3px;
  padding-right: 1px;
}

.tool.glasses {
  width: 26px;
}

.tool.ok {
  width: 26px;
  height: 26px;
  border: 1px solid #bfc5c9;
  border-radius: 3px;
  background: #f1f3f4;
}

.preview {
  appearance: none;
  width: 13px;
  height: 13px;
  margin: 0;
  border: 1px solid #9ab0c0;
  background: #fff;
}

.preview:checked::before {
  content: "✓";
  display: block;
  color: #2f5f86;
  font: bold 11px/11px "DejaVu Sans", sans-serif;
  text-align: center;
}

/* Workspace */
.workspace {
  display: flex;
  flex: 1;
  min-height: 0;
}

.navigator {
  display: flex;
  flex-direction: column;
  width: 225px;
  padding-top: 3px;
  background: linear-gradient(90deg, #d9e7f1, #cddfed);
}

.nav-tabs {
  display: flex;
  height: 25px;
  padding-left: 6px;
}

.nav-tab {
  width: 46px;
  padding-left: 11px;
  margin-right: -4px;
  background: #b3cbde;
  clip-path: polygon(0 0, 68% 0, 100% 100%, 0 100%);
}

.nav-tab.current {
  background: #fff;
}

.nav-tab svg {
  width: 20px;
  height: 20px;
}

.nav-body {
  display: flex;
  flex: 1;
  flex-direction: column;
  padding: 0 8px 6px 6px;
  border: 1px solid #a5bac8;
  border-width: 1px 1px 0 0;
  border-radius: 0 6px 0 0;
  background: linear-gradient(100deg, #fff, #d9e8f3 40%, #d4e4f0);
}

.nav-head {
  display: flex;
  align-items: center;
  height: 28px;
  margin-bottom: 2px;
}

.nav-head h2 {
  flex: 1;
  margin: 0;
  padding-left: 18px;
  font: bold 13px/24px "Liberation Sans", "Noto Sans CJK SC", sans-serif;
}

.nav-head .tool {
  width: 26px;
}

.tree {
  flex: 1;
  padding: 0 5px;
  border: 1px solid #7fa3b4;
  border-radius: 5px;
  background: #fff;
  font: bold 12px/16px "Liberation Mono", "Noto Sans CJK SC", monospace;
  white-space: nowrap;
}

.tree svg {
  width: 16px;
  height: 16px;
  margin-right: 3px;
}

.tree-root,
.tree li {
  display: flex;
  align-items: center;
  height: 16px;
}

.tree ul {
  margin: 0;
  padding: 0 0 0 8px;
  list-style: none;
}

.tree li {
  border-left: 1px dotted #9aa0a4;
}

.tree li svg {
  color: #8a4a28;
}

.tree li::before {
  content: "";
  align-self: flex-start;
  width: 10px;
  height: 8px;
  border-bottom: 1px dotted #9aa0a4;
}

.tree li:last-child {
  border-left: 0;
}

.tree li:last-child::before {
  width: 11px;
  border-left: 1px dotted #9aa0a4;
}

.mark {
  color: #a89600;
  font-size: 10px;
}

.sash {
  display: flex;
  flex-direction: column;
  gap: 9px;
  width: 9px;
  padding-top: 222px;
  background: linear-gradient(90deg, #cfe0ec, #b9cfe4);
}

.sash-handle {
  display: flex;
  align-items: center;
  justify-content: center;
  height: 94px;
  border: 1px solid #a9c2d4;
  border-right: 0;
  border-radius: 4px 0 0 4px;
  background: #c6daea;
}

.sash-handle.low {
  border: 1px solid #6f8ea6;
  border-right: 0;
  background: #a9c3d9;
}

.sash-handle::before {
  content: "";
  width: 3px;
  height: 3px;
  border-radius: 2px;
  background: #2c3c46;
}

/* Graphics window */
.viewport {
  position: relative;
  flex: 1;
  overflow: hidden;
  background: linear-gradient(#c5dbef, #91b0cf 50%, #587aac);
}

.scene {
  width: 100%;
  height: 100%;
}

.datum-lines {
  fill: none;
  stroke: #7d6655;
}

.datum-names {
  fill: #7d6655;
  font: 14px "Liberation Mono", monospace;
}

.trajectory {
  fill: none;
  stroke: #e8383c;
  stroke-width: 4;
  stroke-linejoin: round;
}

.arrow {
  fill: #ffff66;
  stroke: #ffff66;
}

.start {
  fill: #fff;
  stroke: #222;
}

.leader {
  fill: none;
  stroke: #101850;
}

.leader-head {
  fill: #101850;
  stroke: #101850;
}

.origin {
  fill: #101850;
  font: 9px "Noto Sans CJK SC", sans-serif;
}

.memo {
  position: absolute;
  top: 10px;
  left: 130px;
  width: 281px;
  height: 153px;
  margin: 0;
  background: #fff;
  color: #c01c24;
  font: 300 22px/22px "Liberation Sans", "Noto Sans CJK SC", sans-serif;
}

.tolerance {
  position: absolute;
  right: 22px;
  bottom: 5px;
  color: #dfe3e2;
  font: 12px/14px "Liberation Mono", monospace;
  text-align: center;
}

/* Feature toolbars on the right */
.features {
  display: flex;
  width: 82px;
  background: #dce9f2;
}

.feature-col {
  width: 41px;
  padding-right: 1px;
}

.rule {
  display: block;
  height: 3px;
  margin: 5px 0 6px;
  border: 1px dotted #5f7a8c;
  border-width: 1px 0;
}

.rule:first-child {
  margin: 4px 0 6px;
}

.flyout {
  display: flex;
  align-items: center;
}

.fly-arrow {
  margin-left: 4px;
  border: 4px solid transparent;
  border-left-color: #26343d;
  border-right: 0;
}

.flyout-group .fly-arrow {
  border-left-color: #a9b4bc;
}

.feature-col .flyout-group .tool {
  color: #97a2aa;
}

/* Taskbar */
.bottom {
  position: relative;
  color: #000;
  font: 11px "Liberation Sans", "Noto Sans CJK SC", sans-serif;
}

.taskbar,
.covered {
  display: flex;
  align-items: center;
  background: #d4d0c8;
}

.taskbar {
  height: 30px;
  margin-right: 5px;
  border-top: 2px solid #fff;
}

.start-button {
  display: flex;
  align-items: center;
  gap: 2px;
  width: 44px;
  height: 22px;
  border: 1px solid #404040;
  border-width: 0 2px 2px 0;
  font-size: 12px;
  white-space: nowrap;
}

.start-button svg,
.task svg,
.quick svg,
.tray svg,
.keyboard {
  width: 16px;
  height: 16px;
}

.quick {
  display: flex;
  align-items: center;
  gap: 10px;
  padding: 0 4px 0 10px;
}

.quick span {
  font: bold 16px/20px "Liberation Sans", sans-serif;
}

.task {
  display: flex;
  align-items: center;
  flex: none;
  gap: 4px;
  width: 160px;
  height: 22px;
  margin-right: 3px;
  padding: 0 3px;
  overflow: hidden;
  border: 1px solid #fff;
  border-right: 2px solid #505050;
  border-bottom: 2px solid #505050;
  white-space: nowrap;
}

.task.pressed {
  border: 1px solid #fff;
  border-top: 2px solid #505050;
  border-left: 2px solid #505050;
  background: #ecebe6;
}

.keyboard {
  margin-left: auto;
}

.tray {
  display: flex;
  align-items: center;
  gap: 2px;
  height: 24px;
  margin: 0 2px 0 8px;
  padding: 0 8px 0 4px;
  border: 1px solid #808080;
  border-right-color: #fff;
  border-bottom-color: #fff;
}

.tray time {
  margin-left: 4px;
}

.covered {
  align-items: flex-end;
  height: 13px;
  padding-bottom: 4px;
  overflow: hidden;
}

.covered .quick {
  padding-left: 138px;
  padding-right: 22px;
  gap: 8px;
}

.covered .task,
.covered .quick,
.covered .tray {
  flex: none;
}

.covered .tray {
  margin-right: 0;
  padding-right: 0;
}

.remains {
  display: flex;
  height: 10px;
  background: #3a6ea5;
}

.remains-page {
  width: 303px;
  background: linear-gradient(90deg, #e8e4d8 12px, #fff 12px 84px, #a9a69e 84px 85px, #fff 85px 93px, #a9a69e 93px 94px, #fff 94px);
}

.remains-edge {
  width: 17px;
  background: #dce9f2;
}

.remains-view {
  flex: 1;
  background: #7896c4;
}

.remains-noise {
  width: 125px;
  margin-right: 42px;
  background: #fff;
}

.remains-view,
.remains-noise {
  overflow: hidden;
}

.remains-view svg,
.remains-noise svg {
  height: 10px;
}

.remains-view svg {
  width: 670px;
}

.remains-noise svg {
  width: 125px;
}

/* Site logo lying over the start button */
.logo {
  position: absolute;
  left: 6px;
  bottom: 5px;
  width: 122px;
  height: 48px;
}

.logo-name {
  fill: url(#g-logo);
  stroke: #0c3c64;
  stroke-width: 3;
  paint-order: stroke;
  font: italic bold 42px "Liberation Sans", sans-serif;
}

.logo-at {
  fill: #fff;
  font: bold 9px "Liberation Sans", sans-serif;
}

.logo-url {
  fill: #fff;
  font: italic bold 9px "DejaVu Sans", sans-serif;
}
```
